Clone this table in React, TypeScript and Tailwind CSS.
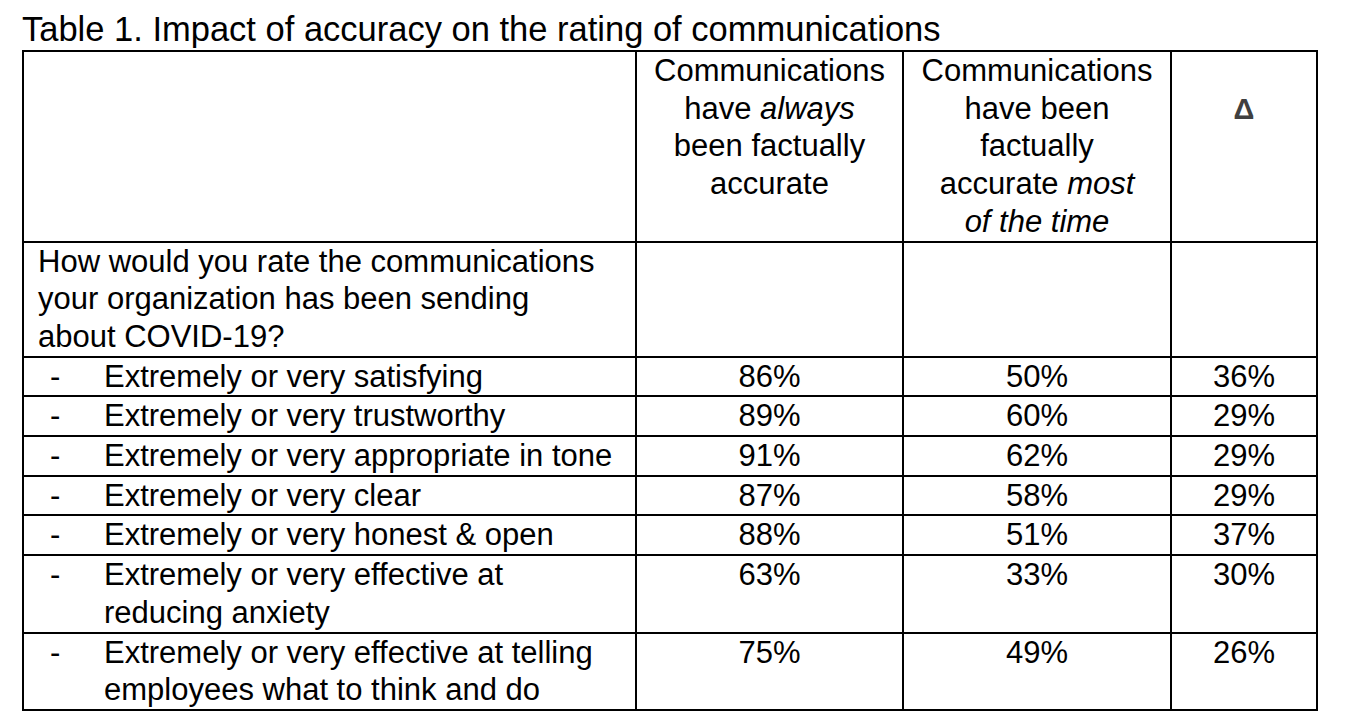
type Row = {
  label: string[];
  always: string;
  most: string;
  delta: string;
};

const ROWS: Row[] = [
  { label: ["Extremely or very satisfying"], always: "86%", most: "50%", delta: "36%" },
  { label: ["Extremely or very trustworthy"], always: "89%", most: "60%", delta: "29%" },
  { label: ["Extremely or very appropriate in tone"], always: "91%", most: "62%", delta: "29%" },
  { label: ["Extremely or very clear"], always: "87%", most: "58%", delta: "29%" },
  { label: ["Extremely or very honest & open"], always: "88%", most: "51%", delta: "37%" },
  { label: ["Extremely or very effective at", "reducing anxiety"], always: "63%", most: "33%", delta: "30%" },
  {
    label: ["Extremely or very effective at telling", "employees what to think and do"],
    always: "75%",
    most: "49%",
    delta: "26%",
  },
];

const cell = "border-2 border-black align-top p-0 whitespace-nowrap";
const numCell = `${cell} text-center`;

export default function App() {
  return (
    <div className="min-h-screen bg-white text-black font-['Liberation_Sans',Arial,sans-serif]">
      <div className="pl-[22px] pt-[10px] pb-[2px] text-[34.5px] leading-[38px]">
        Table 1. Impact of accuracy on the rating of communications
      </div>

      <table className="ml-[22px] w-[1296px] table-fixed border-collapse text-[31px] leading-[37.7px]">
        <colgroup>
          <col className="w-[613px]" />
          <col className="w-[267px]" />
          <col className="w-[268px]" />
          <col className="w-[146px]" />
        </colgroup>
        <tbody>
          <tr>
            <td className={cell}></td>
            <td className={numCell}>
              Communications
              <br />
              have <i>always</i>
              <br />
              been factually
              <br />
              accurate
            </td>
            <td className={numCell}>
              Communications
              <br />
              have been
              <br />
              factually
              <br />
              accurate <i>most</i>
              <br />
              <i>of the time</i>
            </td>
            <td className={numCell}>
              <br />
              <span className="text-[29px] font-bold text-[#404040]">Δ</span>
            </td>
          </tr>

          <tr>
            <td className={`${cell} pl-[14px]`}>
              How would you rate the communications
              <br />
              your organization has been sending
              <br />
              about COVID-19?
            </td>
            <td className={cell}></td>
            <td className={cell}></td>
            <td className={cell}></td>
          </tr>

          {ROWS.map((r) => (
            <tr key={r.label[0] + r.always}>
              <td className={`${cell} pl-[14px]`}>
                <div className="flex">
                  <span className="w-[66px] shrink-0 pl-[12px]">-</span>
                  <span>
                    {r.label.map((line, i) => (
                      <span key={i} className="block">
                        {line}
                      </span>
                    ))}
                  </span>
                </div>
              </td>
              <td className={numCell}>{r.always}</td>
              <td className={numCell}>{r.most}</td>
              <td className={numCell}>{r.delta}</td>
            </tr>
          ))}
        </tbody>
      </table>
    </div>
  );
}
